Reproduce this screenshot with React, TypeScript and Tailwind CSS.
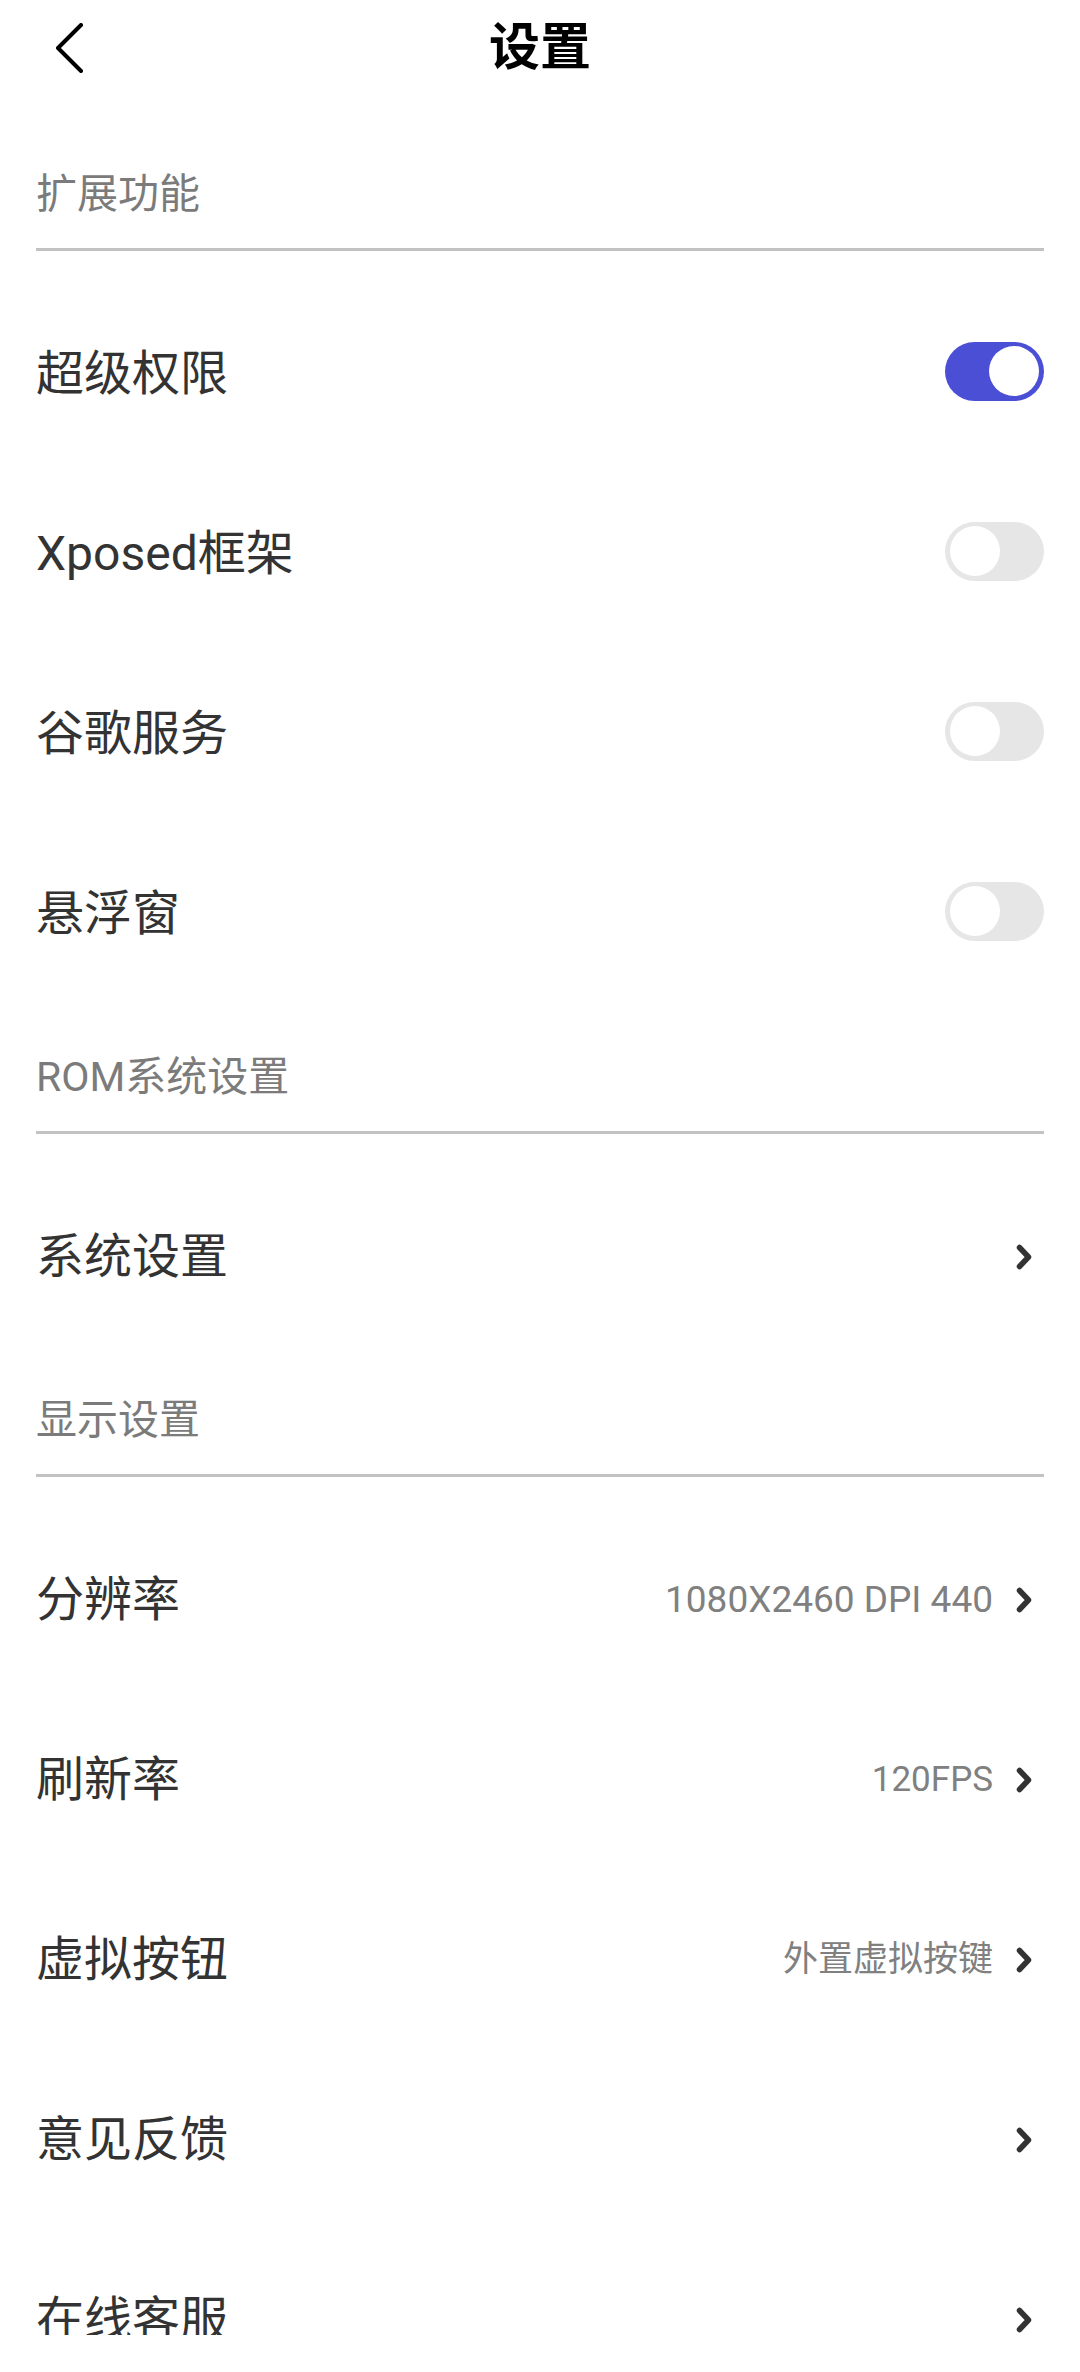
import React from "react";

const FONT = { fontFamily: "Roboto, 'Noto Sans CJK SC', sans-serif" };

function Chevron() {
  return (
    <svg width="16" height="26" viewBox="0 0 16 26" className="shrink-0">
      <path d="M3.5 3.5 L12.5 13 L3.5 22.5" fill="none" stroke="#333333" strokeWidth="5.5" strokeLinecap="round" strokeLinejoin="round" />
    </svg>
  );
}

function Toggle({ on }: { on: boolean }) {
  return (
    <div
      className={
        on
          ? "w-[99px] h-[59px] rounded-full bg-[#4b4fd6] flex items-center justify-end px-[5px]"
          : "w-[99px] h-[59px] rounded-full bg-[#e6e6e6] flex items-center justify-start px-[5px]"
      }
    >
      <div className="w-[50px] h-[50px] rounded-full bg-white" />
    </div>
  );
}

function SectionHeader({ title, first }: { title: string; first?: boolean }) {
  return (
    <div className={first ? "pt-[66px]" : "pt-[44px]"}>
      <div className="pt-[4px] text-[41px] leading-[56px] text-[#7b7b7b]">{title}</div>
      <div className="mt-[26px] h-[3px] bg-[#c2c2c2]" />
      <div className="h-[30px]" />
    </div>
  );
}

function Row({ label, children }: { label: string; children?: React.ReactNode }) {
  return (
    <div className="h-[180px] flex items-center justify-between">
      <div className="pt-[6px] text-[48px] leading-[60px] text-[#333333]">{label}</div>
      {children}
    </div>
  );
}

function LinkRight({ value, cls }: { value?: string; cls?: string }) {
  return (
    <div className="pt-[6px] flex items-center gap-[23px] pr-[12px]">
      {value ? <span className={cls}>{value}</span> : null}
      <Chevron />
    </div>
  );
}

export default function App() {
  return (
    <div className="w-[1080px] min-h-[2372px] bg-white" style={FONT}>
      <div className="h-[2335px] overflow-hidden">
        <div className="h-[96px] flex items-center">
          <div className="w-[120px] pl-[54px] flex items-center">
            <svg width="30" height="50" viewBox="0 0 30 50">
              <path d="M27 2 L4 25 L27 48" fill="none" stroke="#000000" strokeWidth="4" strokeLinecap="round" strokeLinejoin="round" />
            </svg>
          </div>
          <div className="flex-1 text-center text-[51px] leading-[60px] font-bold text-black">设置</div>
          <div className="w-[120px]" />
        </div>
        <div className="px-[36px]">
          <SectionHeader title="扩展功能" first />
          <Row label="超级权限">
            <Toggle on />
          </Row>
          <Row label="Xposed框架">
            <Toggle on={false} />
          </Row>
          <Row label="谷歌服务">
            <Toggle on={false} />
          </Row>
          <Row label="悬浮窗">
            <Toggle on={false} />
          </Row>
          <SectionHeader title="ROM系统设置" />
          <Row label="系统设置">
            <LinkRight />
          </Row>
          <SectionHeader title="显示设置" />
          <Row label="分辨率">
            <LinkRight value="1080X2460 DPI 440" cls="text-[37px] leading-[48px] text-[#808080]" />
          </Row>
          <Row label="刷新率">
            <LinkRight value="120FPS" cls="text-[35px] leading-[48px] text-[#808080]" />
          </Row>
          <Row label="虚拟按钮">
            <LinkRight value="外置虚拟按键" cls="text-[35px] leading-[48px] text-[#808080]" />
          </Row>
          <Row label="意见反馈">
            <LinkRight />
          </Row>
          <Row label="在线客服">
            <LinkRight />
          </Row>
        </div>
      </div>
    </div>
  );
}
